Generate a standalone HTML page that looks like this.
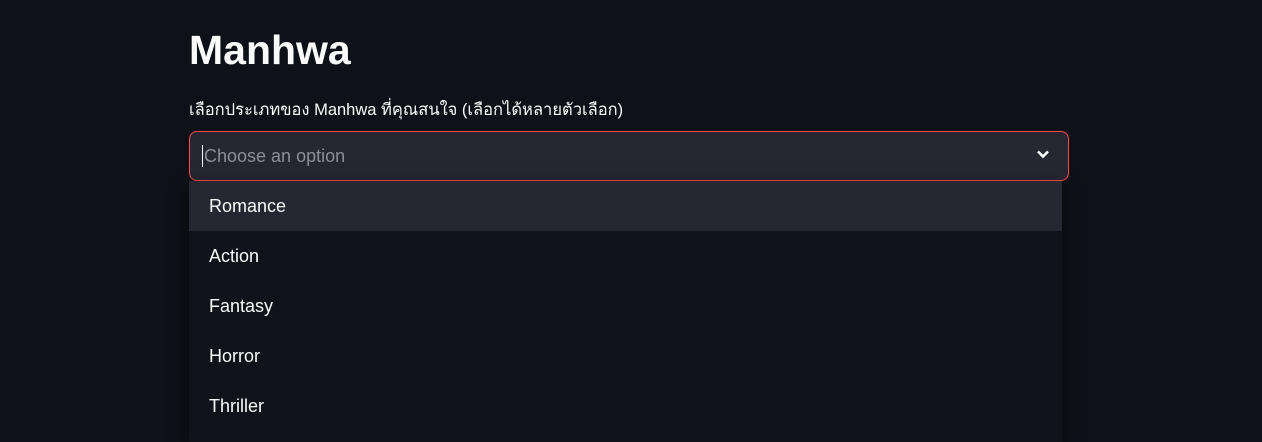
<!DOCTYPE html>
<html><head><meta charset="utf-8"><style>
body{margin:0;width:1262px;height:442px;background:#0e1117;overflow:hidden;font-family:"Liberation Sans","Noto Sans CJK SC",sans-serif;color:#fafafa;position:relative}
h1{position:absolute;left:189px;top:24px;margin:0;font-size:41px;font-weight:700;line-height:52px}
.lab{position:absolute;left:189px;top:99px;font-size:16.5px;line-height:22px}
.sel{position:absolute;left:189px;top:131px;width:878px;height:48px;background:#262730;border:1px solid #ff4b4b;border-radius:8px}
.sel .ph{position:absolute;left:12px;top:13px;font-size:18px;color:#8d8f96;border-left:1px solid #fafafa;padding-left:1px;line-height:22px}
.sel svg{position:absolute;right:18px;top:17px}
.dd{position:absolute;left:189px;top:181px;width:873px;height:261px;background:#10131a;box-shadow:0 4px 16px rgba(0,0,0,.5)}
.it{height:50px;line-height:50px;padding-left:20px;font-size:18px}
.it.h{background:#262730}
</style></head><body>
<h1>Manhwa</h1>
<div class="lab">เลือกประเภทของ Manhwa ที่คุณสนใจ (เลือกได้หลายตัวเลือก)</div>
<div class="sel"><span class="ph">Choose an option</span>
<svg width="14" height="10" viewBox="0 0 14 10"><path d="M2 2.5 L7 7.5 L12 2.5" stroke="#fff" stroke-width="2.6" fill="none"/></svg></div>
<div class="dd">
<div class="it h">Romance</div>
<div class="it">Action</div>
<div class="it">Fantasy</div>
<div class="it">Horror</div>
<div class="it">Thriller</div>
</div>
</body></html>
